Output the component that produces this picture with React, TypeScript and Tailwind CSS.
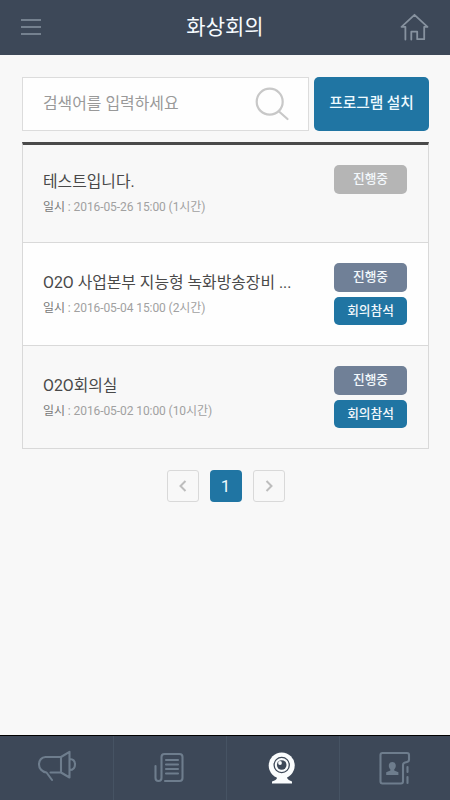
import React from 'react';

type Meeting = { title: string; date: string; joinable: boolean; row: string; text: string };

const meetings: Meeting[] = [
  { title: '테스트입니다.', date: '2016-05-26 15:00 (1시간)', joinable: false, row: 'h-[98px] bg-[#f8f8f8]', text: 'pt-[5px]' },
  { title: 'O2O 사업본부 지능형 녹화방송장비 ...', date: '2016-05-04 15:00 (2시간)', joinable: true, row: 'h-[103px] bg-[#fefefe]', text: 'pt-[8px]' },
  { title: 'O2O회의실', date: '2016-05-02 10:00 (10시간)', joinable: true, row: 'h-[103px] bg-[#f8f8f8]', text: 'pt-[8px]' },
];

function Header() {
  return (
    <header className="flex h-[54.5px] shrink-0 items-center justify-between bg-[#3d4858] pr-5 pl-[21px]">
      <button aria-label="메뉴" className="flex w-[29px] flex-col gap-[5px]">
        <span className="h-[2px] w-5 bg-[#75818f]" />
        <span className="h-[2px] w-5 bg-[#75818f]" />
        <span className="h-[2px] w-5 bg-[#75818f]" />
      </button>
      <h1 className="text-[21px] leading-[54px] font-normal text-[#f6fbff]">화상회의</h1>
      <button aria-label="홈">
        <svg width="30" height="28" viewBox="0 0 30 28" fill="none" stroke="#87929f" strokeWidth="1.8" strokeLinejoin="round" strokeLinecap="round">
          <path d="M5.4 26.5V13.8H1.5L14.5 1.8L27.5 13.8H24.2V26.2H17.2V18.7H11.3V26.5" />
        </svg>
      </button>
    </header>
  );
}

function MeetingRow({ title, date, joinable, row, text }: Meeting) {
  return (
    <li className={`flex justify-between border-b border-[#d9d9d9] pt-5 pr-[21px] pl-5 ${row}`}>
      <div className={text}>
        <h2 className="text-[15.85px] leading-6 font-normal whitespace-nowrap text-[#494949]">{title}</h2>
        <p className="mt-[3px] text-[12px] leading-5 tracking-[-0.08px] whitespace-nowrap text-[#a1a1a1]">
          <span className="text-[#777777]">일시</span> : {date}
        </p>
      </div>
      <div className="flex w-[73px] flex-col gap-[5px] text-center text-[12.7px] leading-7 font-medium text-[#f3f8fc]">
        <span className={`h-[28.5px] rounded-[5px] ${joinable ? 'bg-[#708097]' : 'bg-[#b5b5b5]'}`}>진행중</span>
        {joinable && <button className="h-[28.5px] rounded-[5px] bg-[#2075a3]">회의참석</button>}
      </div>
    </li>
  );
}

function Tab({ label, children }: { label: string; children: React.ReactNode }) {
  return (
    <button aria-label={label} className="flex justify-center border-r border-[#465363] pt-[11px] last:border-r-0">
      <svg width="44" height="42" viewBox="0 0 44 42" fill="none" stroke="#6e7d8d" strokeWidth="2.1" strokeLinejoin="round" strokeLinecap="round">
        {children}
      </svg>
    </button>
  );
}

export default function App() {
  return (
    <div className="flex h-[800px] w-[450px] flex-col overflow-hidden bg-[#f8f8f8] font-[Roboto,'Noto_Sans_CJK_KR',sans-serif]">
      <Header />
      <main className="flex-1 pt-[22px] pr-[21px] pl-[22px]">
        <div className="flex h-[54.5px] gap-[5.5px]">
          <div className="flex w-[286.5px] items-center justify-between border border-[#dcdcdc] bg-[#fefefe] pr-[18px] pl-5">
            <span className="text-[15.9px] text-[#999999]">검색어를 입력하세요</span>
            <svg width="36" height="36" viewBox="0 0 36 36" fill="none" stroke="#c8c8c8" strokeWidth="2.2" strokeLinecap="round">
              <circle cx="15.7" cy="15.7" r="13" />
              <path d="M25 25.5L33.5 33" />
            </svg>
          </div>
          <button className="flex-1 rounded-[5px] bg-[#2075a3] pb-0.5 text-[14.7px] font-medium whitespace-nowrap text-[#eefaff]">프로그램 설치</button>
        </div>
        <ul className="mt-[11px] border-x border-t-[3px] border-x-[#d9d9d9] border-t-[#4a4a4a]">
          {meetings.map((m) => <MeetingRow key={m.date} {...m} />)}
        </ul>
        <nav className="mt-[21px] flex justify-center gap-[11px]">
          <button aria-label="이전" className="flex h-8 w-8 items-center justify-center rounded-[3px] border border-[#d9d9d9]">
            <svg width="8" height="12" viewBox="0 0 8 12" fill="none" stroke="#bdbdbd" strokeWidth="2"><path d="M6.5 1L1.5 6L6.5 11" /></svg>
          </button>
          <button className="h-8 w-8 rounded-[4px] bg-[#2075a3] pt-0.5 text-[17px] text-[#eefaff]">1</button>
          <button aria-label="다음" className="flex h-8 w-8 items-center justify-center rounded-[3px] border border-[#d9d9d9]">
            <svg width="8" height="12" viewBox="0 0 8 12" fill="none" stroke="#bdbdbd" strokeWidth="2"><path d="M1.5 1L6.5 6L1.5 11" /></svg>
          </button>
        </nav>
      </main>
      <footer className="grid h-[65px] shrink-0 grid-cols-[114px_113px_113px_110px] border-t border-black bg-[#3d4858]">
        <Tab label="공지">
          <path d="M26 10H10.5C6.5 10 4 13.5 4 17.5S7 25 11.5 25.5L17 33M15.5 25.5H26V10L34.5 4.8V30.5L26 25.5M34.5 12C38 12 40 14 40 17.5S38 23 34.5 23" />
        </Tab>
        <Tab label="뉴스">
          <path d="M7.5 19V31Q7.5 34 10.5 34T13.5 31V10Q13.5 7 16.5 7H31.5Q34.5 7 34.5 10V31Q34.5 34 31.5 34H17M18 13H30M18 17.5H30M18 22H30M18 26.5H30" />
        </Tab>
        <Tab label="화상회의">
          <g fill="#fafcfd" stroke="none">
            <circle cx="20.7" cy="18.5" r="13" />
            <path d="M15 28H27L26 31Q27 33 31 34.5V36.5H11V34.5Q15.5 33 16 31Z" />
          </g>
          <circle cx="20.7" cy="18" r="7.6" stroke="#3d4858" strokeWidth="1.3" />
          <circle cx="20.7" cy="18" r="4.8" fill="#3d4858" stroke="none" />
          <circle cx="19" cy="16" r="1.9" fill="#fafcfd" stroke="none" />
        </Tab>
        <Tab label="주소록">
          <g transform="translate(1 0)">
            <path d="M29 24.5V34.5Q29 36.5 27 36.5H8.5Q6.5 36.5 6.5 34.5V8Q6.5 6 8.5 6H33Q35 6 35 8V13Q35 14.5 33 15L31 15.5Q29 16 29 18V24.5M33.5 20V25M33.5 30V36" />
            <path fill="#6e7d8d" stroke="none" d="M18.3 15C20.7 15 22 16.7 21.8 19C21.7 20.8 20.6 21.8 20.2 22.5V23.4L24.4 25.2V28H12.2V25.2L16.4 23.4V22.5C16 21.8 14.9 20.8 14.8 19C14.6 16.7 15.9 15 18.3 15Z" />
          </g>
        </Tab>
      </footer>
    </div>
  );
}
